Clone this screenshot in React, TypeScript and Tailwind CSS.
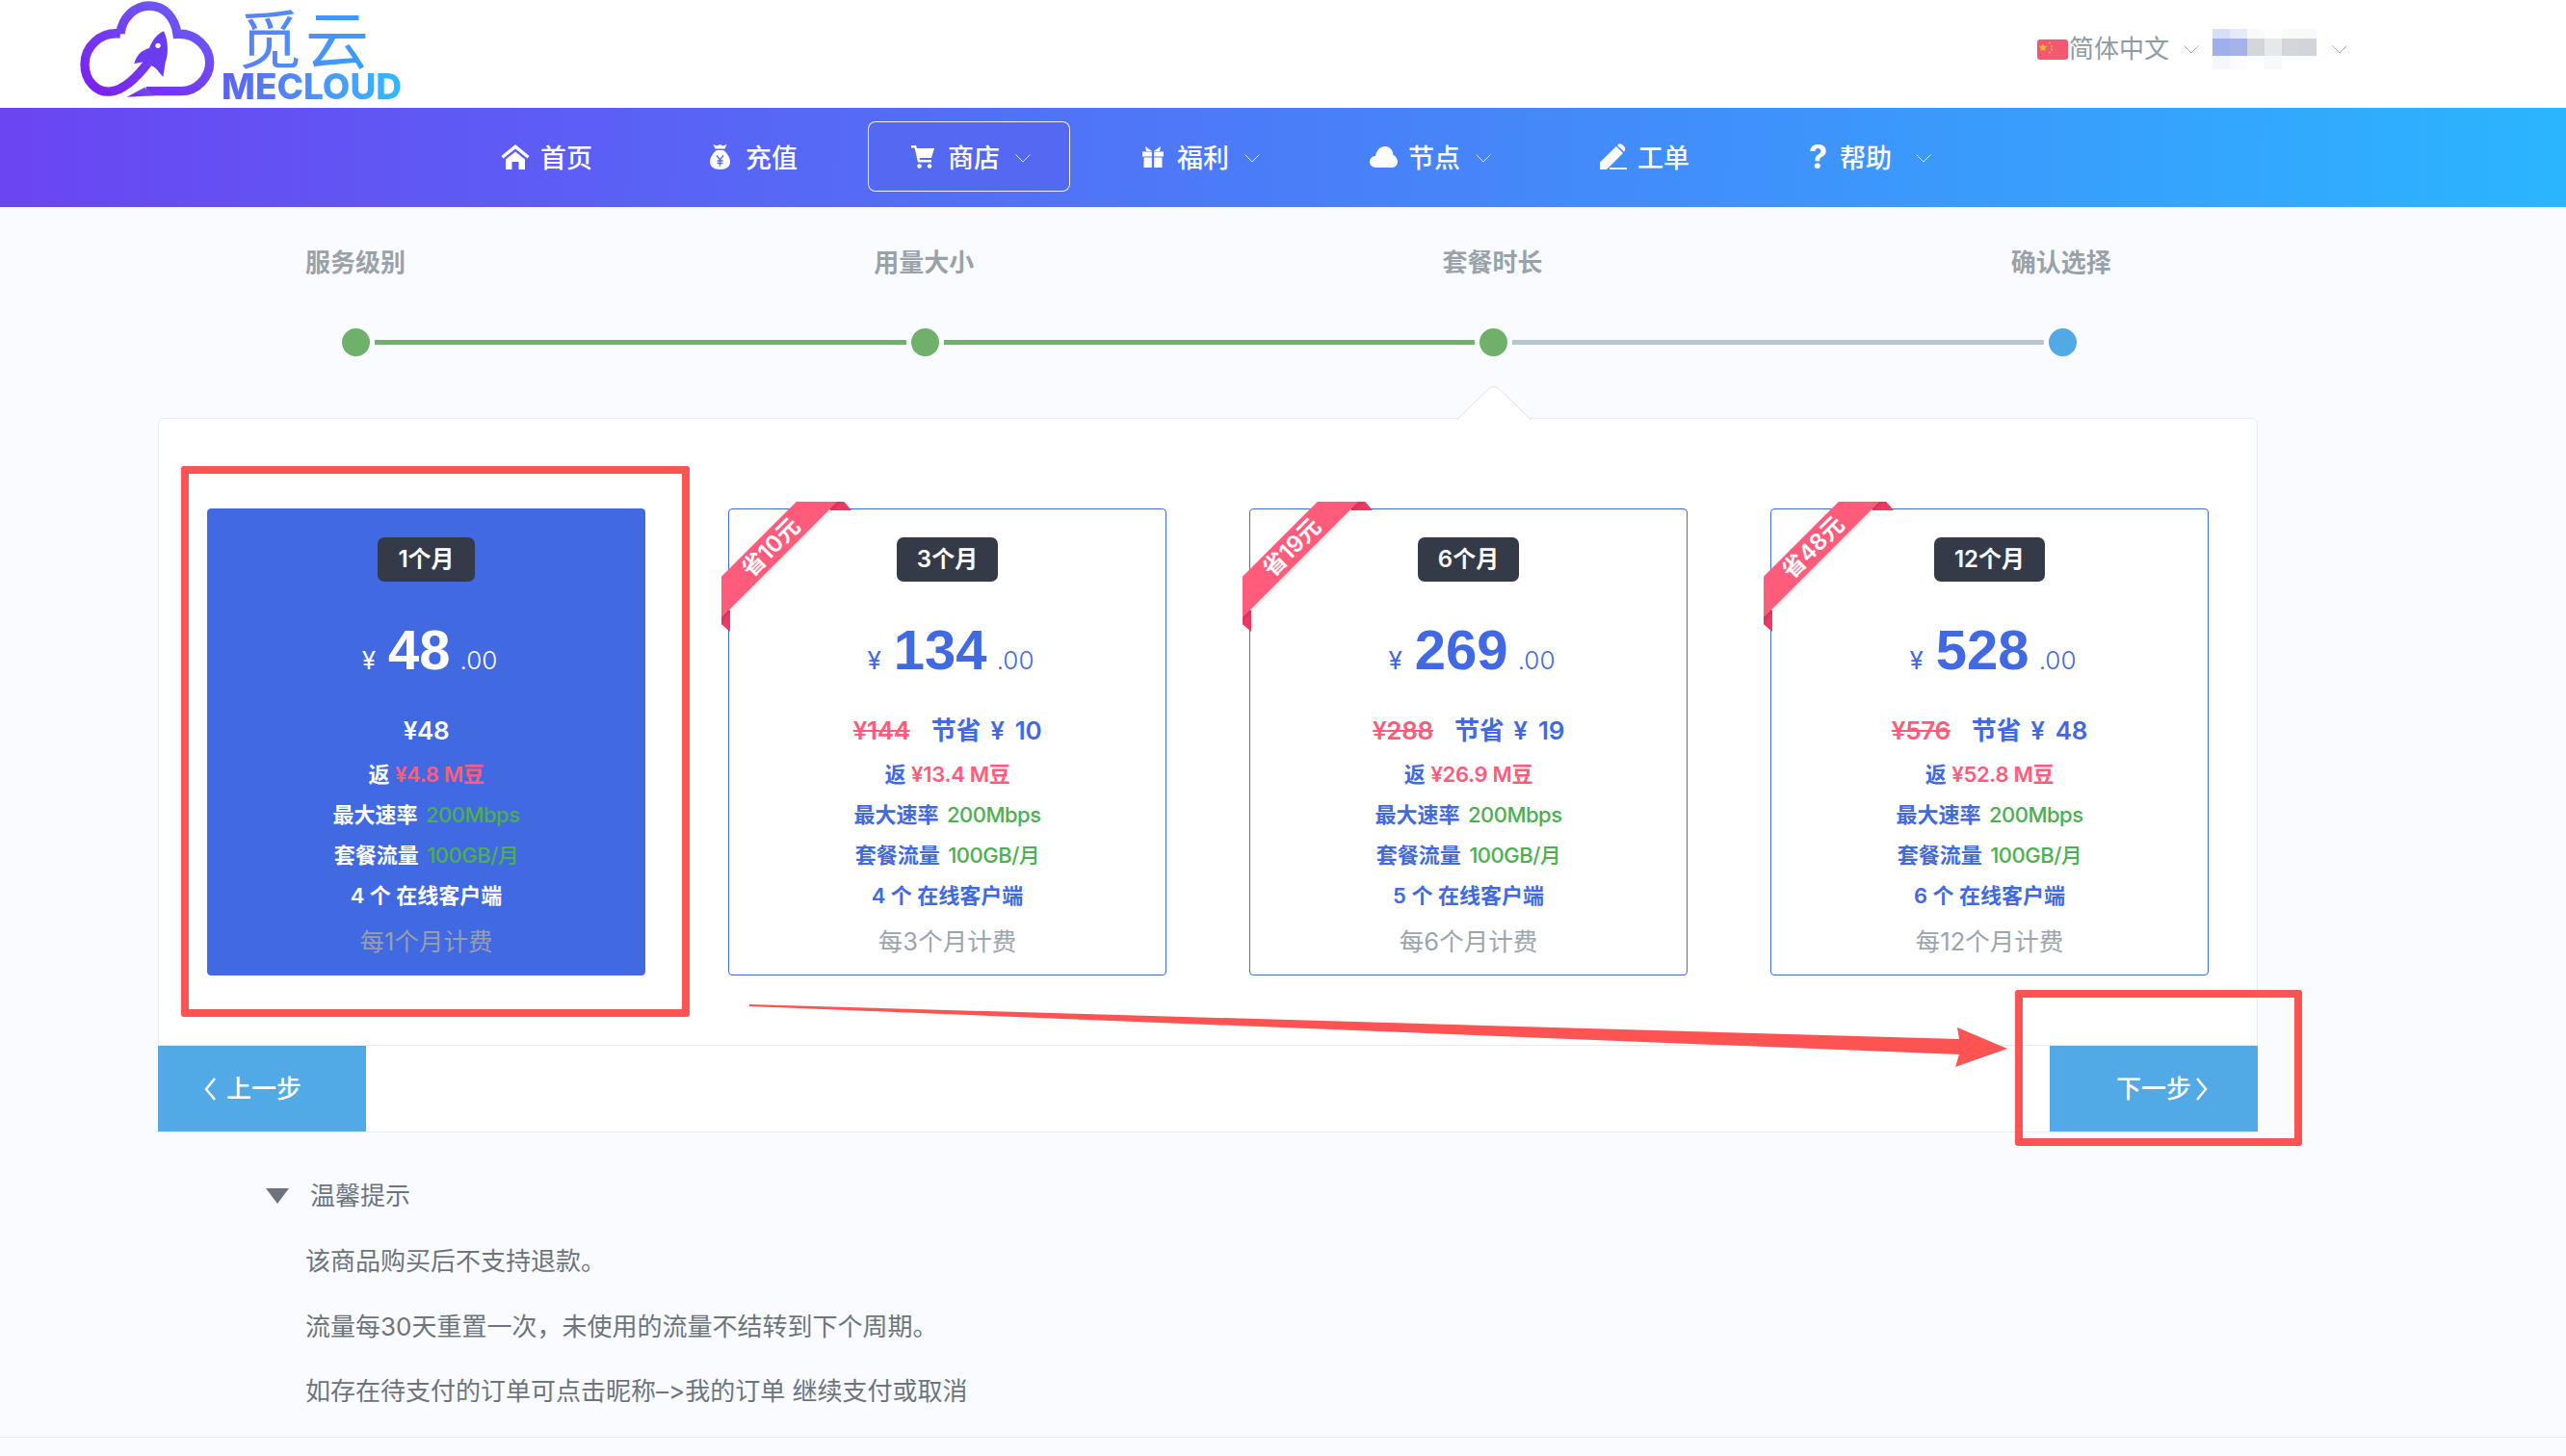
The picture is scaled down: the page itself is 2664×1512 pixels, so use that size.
const plans = [
  { months: 1, price: 48, orig: 48, save: 0, back: "4.8", clients: 4 },
  { months: 3, price: 134, orig: 144, save: 10, back: "13.4", clients: 4 },
  { months: 6, price: 269, orig: 288, save: 19, back: "26.9", clients: 5 },
  { months: 12, price: 528, orig: 576, save: 48, back: "52.8", clients: 6 },
];

const mosaic = [
  "bg-[#d8def7]", "bg-[#e5e9f8]", "bg-[#f8faf9]", "bg-[#fdfdfd]", "bg-[#f8faf8]", "bg-[#f8faf8]",
  "bg-[#9eb0ea]", "bg-[#a5b3e6]", "bg-[#d3d7da]", "bg-[#e6e9ea]", "bg-[#d3d7da]", "bg-[#d1d5d9]",
  "bg-[#f6f7fe]", "bg-[#fcfcfe]", "bg-white", "bg-[#f9f9fb]", "bg-white", "bg-white",
];

const Chevron = ({ className }: { className: string }) => (
  <svg viewBox="0 0 16 9" className={`h-[9px] w-[16px] shrink-0 ${className}`} fill="none" stroke="currentColor" strokeWidth="1">
    <polyline points="0.5,0.5 8,8 15.5,0.5" />
  </svg>
);

const Logo = () => (
  <div className="ml-[60px] flex items-start">
    <svg viewBox="0 0 510 345" className="h-[115px] w-[170px]">
      <defs>
        <linearGradient id="cloud" x1="0" y1="1" x2="1" y2="0">
          <stop offset="0" stopColor="#7b1fee" />
          <stop offset="1" stopColor="#6a62f6" />
        </linearGradient>
      </defs>
      <path
        d="M195 105C200 55 240 18 285 18C335 18 365 58 372 106C430 102 473 148 473 195C473 242 432 284 385 284L275 284M195 105C130 98 84 148 84 200C84 250 120 290 165 285C210 280 255 230 285 190"
        fill="none"
        stroke="url(#cloud)"
        strokeWidth="28"
      />
      <path d="M215 302L270 272L300 298Z" fill="url(#cloud)" />
      <path
        d="M330 97C345 130 345 170 335 195L328 240C315 225 305 210 292 205L285 190L238 198C245 170 265 155 285 150C295 125 310 105 330 97Z"
        fill="#6a3cf0"
      />
      <circle cx="312" cy="142" r="8" fill="#fff" />
    </svg>
    <div className="flex flex-col">
      <span className="mt-[8px] ml-[17px] h-[68px] w-[150px] bg-gradient-to-r from-[#5a80f6] to-[#2fa2ff] bg-clip-text text-[66px] leading-[68px] tracking-[4px] whitespace-nowrap text-transparent">
        觅云
      </span>
      <span className="h-[28px] w-[190px] bg-gradient-to-r from-[#5a62f0] to-[#2bbcff] bg-clip-text text-[37px] leading-[28px] font-extrabold whitespace-nowrap text-transparent">
        MECLOUD
      </span>
    </div>
  </div>
);

const Header = () => (
  <div className="flex h-[112px] items-start justify-between bg-white">
    <Logo />
    <div className="mt-[30px] mr-[227px] flex items-center text-[#8f9ba3]">
      <svg viewBox="0 0 32 21" className="h-[21px] w-[32px]">
        <rect width="32" height="21" rx="3" fill="#ef5a70" />
        <path d="M6 4l1.3 2.8 3 .3-2.2 2 .6 3L6 10.6 3.300 12.100l.6-3-2.200-2 3-.3z" fill="#f7b733" />
        <circle cx="13" cy="3.500" r="1" fill="#f7b733" />
        <circle cx="15" cy="7" r="1" fill="#f7b733" />
        <circle cx="15" cy="10.500" r="1" fill="#f7b733" />
        <circle cx="13" cy="13.500" r="1" fill="#f7b733" />
      </svg>
      <span className="ml-[1px] text-[26px] leading-[40px]">简体中文</span>
      <Chevron className="ml-[15px] text-[#a9b2b8]" />
      <div className="ml-[14px] grid h-[42px] w-[108px] grid-cols-6 grid-rows-[10px_18px_14px]">
        {mosaic.map((c, i) => (
          <div key={i} className={c} />
        ))}
      </div>
      <Chevron className="ml-[16px] text-[#a9b2b8]" />
    </div>
  </div>
);

const HomeIcon = () => (
  <svg viewBox="0 0 30 26" className="h-[26px] w-[30px]" fill="#fff">
    <path d="M0.500 12L15 0L29.500 12L27.500 14.500L15 4.500L2.500 14.500Z" />
    <path d="M5 15.500L15 7.500L25 15.500V26H18.500V18H11.500V26H5Z" />
  </svg>
);
const BagIcon = () => (
  <svg viewBox="0 0 21 26" className="mr-[5px] h-[26px] w-[21px]" fill="#fff">
    <path d="M3.500 0L7 1.500L10.500 0L14 1.500L17.500 0L15.500 4.500H5.500Z" />
    <path d="M7 6H14C19 10 21 14.500 21 18C21 23 17 26 10.500 26C4 26 0 23 0 18C0 14.500 2 10 7 6Z" />
    <path d="M7 11.500L10.500 16L14 11.500M10.500 16V22.500M7.500 17H13.500M7.500 19.500H13.500" fill="none" stroke="#5566f0" strokeWidth="1.300" />
  </svg>
);
const CartIcon = () => (
  <svg viewBox="0 0 24 24" className="mr-[3px] h-[24px] w-[24px] shrink-0" fill="#fff">
    <path d="M0 0H5L6 3H24L21 13H8.500L9 15H21V17.500H7L3.500 2.500H0Z" />
    <circle cx="8.500" cy="21.500" r="2.300" />
    <circle cx="19" cy="21.500" r="2.300" />
  </svg>
);
const GiftIcon = () => (
  <svg viewBox="0 0 22 22" className="mr-[3px] h-[22px] w-[22px]" fill="#fff">
    <path d="M3 0L10 5H4ZM19 0L12 5H18Z" />
    <path d="M0 5.500H9.800V10.500H0ZM12.200 5.500H22V10.500H12.200Z" />
    <path d="M1.500 11.500H9.800V22H1.500ZM12.200 11.500H20.500V22H12.200Z" />
  </svg>
);
const CloudIcon = () => (
  <svg viewBox="0 0 29 22" className="h-[22px] w-[29px]" fill="#fff">
    <path d="M7 22C3 22 0 19.500 0 16C0 12.500 3 10 6 10C7 4 11 0 16 0C21 0 24 4 24.500 9C27 10 29 13 29 16C29 19.500 26 22 23 22Z" />
  </svg>
);
const PenIcon = () => (
  <svg viewBox="0 0 28 27" className="h-[27px] w-[28px]" fill="#fff">
    <path d="M0 19.500L17 3L24 10L7 27H0Z" />
    <path d="M18.500 1.500C20 0 21.500 0 23 1L25.500 3.500C26.500 5 26.500 6.500 25.500 8L25 8.500L18 2Z" />
    <rect x="10" y="25" width="18" height="2" />
  </svg>
);

const NavItem = ({ icon, label, arrow, active, wide, className }: { icon: React.ReactNode; label: string; arrow?: boolean; active?: boolean; wide?: boolean; className: string }) => (
  <div className={`flex h-[73px] items-center rounded-[8px] border pl-[44px] text-[27px] leading-none font-medium whitespace-nowrap text-white ${active ? "border-white/90 pr-[40px]" : "border-transparent pr-[44px]"} ${className}`}>
    {icon}
    <span className="mt-[3px] ml-[11px]">{label}</span>
    {arrow && <Chevron className={`mt-[3px] text-white/80 ${wide ? "ml-[25px]" : "ml-[16px]"}`} />}
  </div>
);

const Nav = () => (
  <div className="flex h-[103px] bg-[linear-gradient(92deg,#6a45f2,#2bb5ff)] pt-[14px] pl-[475px]">
    <NavItem icon={<HomeIcon />} label="首页" className="" />
    <NavItem icon={<BagIcon />} label="充值" className="ml-[32px]" />
    <NavItem icon={<CartIcon />} label="商店" arrow active className="ml-[28px] bg-[#5468f2]" />
    <NavItem icon={<GiftIcon />} label="福利" arrow className="ml-[30px]" />
    <NavItem icon={<CloudIcon />} label="节点" arrow className="ml-[24px]" />
    <NavItem icon={<PenIcon />} label="工单" className="ml-[23px]" />
    <NavItem icon={<span className="w-[21px] text-[34px] leading-none font-bold">?</span>} label="帮助" arrow wide className="ml-[34px]" />
  </div>
);

const Dot = ({ className }: { className: string }) => (
  <div className={`h-[39px] w-[39px] shrink-0 rounded-full border-[5px] border-[#fbfcff] ${className}`} />
);

const Steps = () => (
  <div>
    <div className="mr-[229px] ml-[74px] grid grid-cols-4 pt-[40px] text-center text-[26px] leading-[36px] font-semibold text-[#9aa2a9]">
      <div>服务级别</div>
      <div>用量大小</div>
      <div>套餐时长</div>
      <div>确认选择</div>
    </div>
    <div className="mt-[45px] ml-[350px] flex w-[1811px] items-center">
      <Dot className="bg-[#6fb06a]" />
      <div className="h-[5px] flex-1 bg-[#6fb06a]" />
      <Dot className="bg-[#6fb06a]" />
      <div className="h-[5px] flex-1 bg-[#6fb06a]" />
      <Dot className="bg-[#6fb06a]" />
      <div className="h-[5px] flex-1 bg-[#b7c6d3]" />
      <Dot className="bg-[#51a9e6]" />
    </div>
  </div>
);

const Ribbon = ({ text }: { text: string }) => (
  <div className="absolute -top-[8px] -left-[8px] h-[136px] w-[136px] overflow-hidden">
    <div className="absolute top-[113px] left-0 h-[22px] w-[9px] bg-[#e93a63] [clip-path:polygon(0_0,100%_0,100%_100%,0_65%)]" />
    <div className="absolute top-0 left-[113px] h-[9px] w-[22px] bg-[#e93a63] [clip-path:polygon(0_0,65%_0,100%_100%,0_100%)]" />
    <div className="absolute top-[34px] -left-[50px] flex h-[30px] w-[200px] -rotate-45 items-center justify-center bg-[#ff5c7c] pl-[4px] text-[24px] leading-none font-semibold text-white shadow-[0_2px_4px_rgba(0,0,0,0.12)]">
      {text}
    </div>
  </div>
);

const Card = ({ plan, active }: { plan: (typeof plans)[number]; active: boolean }) => (
  <div className={`relative h-[485px] rounded-[4px] border border-[#4169e1] pt-[29px] text-center ${active ? "bg-[#4169e1] text-white" : "bg-white text-[#4169e1]"}`}>
    {plan.save > 0 && <Ribbon text={`省${plan.save}元`} />}
    <span className="inline-block h-[46px] rounded-[7px] bg-[#343a47] px-[21px] text-[24px] leading-[46px] font-semibold text-white">
      {plan.months}个月
    </span>
    <div className="mt-[36px] h-[70px] pl-[7px] leading-[70px]">
      <span className="text-[26px]">¥</span>
      <span className="mr-[10px] ml-[13px] font-['Liberation_Sans',sans-serif] text-[58px] font-bold">{plan.price}</span>
      <span className="text-[26px] font-light">.00</span>
    </div>
    <div className="mt-[29px] h-[40px] text-[26px] leading-[40px] font-semibold tracking-[-0.3px]">
      {plan.save > 0 ? (
        <>
          <span className="mr-[22px] text-[#ff5c7c] line-through">¥{plan.orig}</span>
          节省<span className="mr-[5px] ml-[10px]">¥</span> {plan.save}
        </>
      ) : (
        <>¥{plan.orig}</>
      )}
    </div>
    <div className="mt-[4px] h-[42px] text-[22px] leading-[42px] font-semibold">
      返 <span className="tracking-[-0.3px] text-[#ff5c7c]">¥{plan.back} M豆</span>
    </div>
    <div className="h-[42px] text-[22px] leading-[42px] font-semibold">
      最大速率 <span className="ml-[3px] font-medium tracking-[-0.5px] text-[#4caf50]">200Mbps</span>
    </div>
    <div className="h-[42px] text-[22px] leading-[42px] font-semibold">
      套餐流量 <span className="ml-[3px] font-medium tracking-[-0.5px] text-[#4caf50]">100GB/月</span>
    </div>
    <div className="h-[42px] text-[22px] leading-[42px] font-semibold">{plan.clients} 个 在线客户端</div>
    <div className={`mt-[7px] h-[40px] text-[25.5px] leading-[40px] ${active ? "text-[#969eae]" : "text-[#9aa5ad]"}`}>
      每{plan.months}个月计费
    </div>
  </div>
);

const Panel = () => (
  <div className="relative mt-[59px] mr-[320px] ml-[164px] rounded-t-[6px] border border-[#e9ecef] bg-white px-[50px] pt-[93px]">
    <svg viewBox="0 0 76 36" className="absolute -top-[35px] left-[1348px] h-[36px] w-[76px]">
      <path d="M0 35.500L33 3.500Q38 -0.500 43 3.500L76 35.500Z" fill="#fff" stroke="#dde1ea" />
      <rect x="1" y="35" width="74" height="1" fill="#fff" />
    </svg>
    <div className="grid grid-cols-4 gap-[86px]">
      {plans.map((p, i) => (
        <Card key={p.months} plan={p} active={i === 0} />
      ))}
    </div>
    <div className="-mx-[50px] mt-[72px] flex h-[90px] justify-between border-t border-[#e9ecef] text-[26px] font-medium text-white">
      <div className="-ml-px flex h-[89px] w-[216px] items-center bg-[#51a9e6] pl-[48px]">
        <svg viewBox="0 0 12 24" className="mr-[11px] h-[24px] w-[12px]" fill="none" stroke="currentColor" strokeWidth="2.500">
          <polyline points="11,1 2,12 11,23" />
        </svg>
        上一步
      </div>
      <div className="-mr-px flex h-[89px] w-[216px] items-center bg-[#51a9e6] pl-[69px]">
        下一步
        <svg viewBox="0 0 12 24" className="ml-[5px] h-[24px] w-[12px]" fill="none" stroke="currentColor" strokeWidth="2.500">
          <polyline points="1,1 10,12 1,23" />
        </svg>
      </div>
    </div>
  </div>
);

const Tips = () => (
  <div className="mt-[46px] ml-[276px] text-[26px] leading-[40px] text-[#6c757d]">
    <div className="flex items-center">
      <div className="h-[16px] w-[24px] bg-[#6c757d] [clip-path:polygon(0_0,100%_0,50%_100%)]" />
      <span className="ml-[22px]">温馨提示</span>
    </div>
    <div className="mt-[28px] flex flex-col gap-[27.5px] pl-[41px] [font-variant-ligatures:none] [font-feature-settings:'calt'_0]">
      <p>该商品购买后不支持退款。</p>
      <p>流量每30天重置一次，未使用的流量不结转到下个周期。</p>
      <p>如存在待支付的订单可点击昵称–&gt;我的订单 继续支付或取消</p>
    </div>
  </div>
);

const App = () => {
  return (
    <div className="relative h-[1512px] w-full overflow-hidden bg-[#fafbff] font-[Inter,'Noto_Sans_CJK_SC',sans-serif]">
      <Header />
      <Nav />
      <Steps />
      <Panel />
      <Tips />
      <div className="mt-[27px] border-t border-[#e5e8ec]" />

      {/* red annotations drawn on top of the screenshot */}
      <div className="absolute top-[484px] left-[188px] h-[572px] w-[528px] rounded-[3px] border-[8px] border-[#fd5352]" />
      <div className="absolute top-[1028px] left-[2092px] h-[162px] w-[298px] rounded-[3px] border-[8px] border-[#fd5352]" />
      <svg viewBox="0 0 1320 80" className="absolute top-[1035px] left-[770px] h-[80px] w-[1320px]">
        <polygon points="8,8 1264,44 1262,32 1314,54 1260,73 1264,60 8,10" fill="#fd5352" />
      </svg>
    </div>
  );
};

export default App;
